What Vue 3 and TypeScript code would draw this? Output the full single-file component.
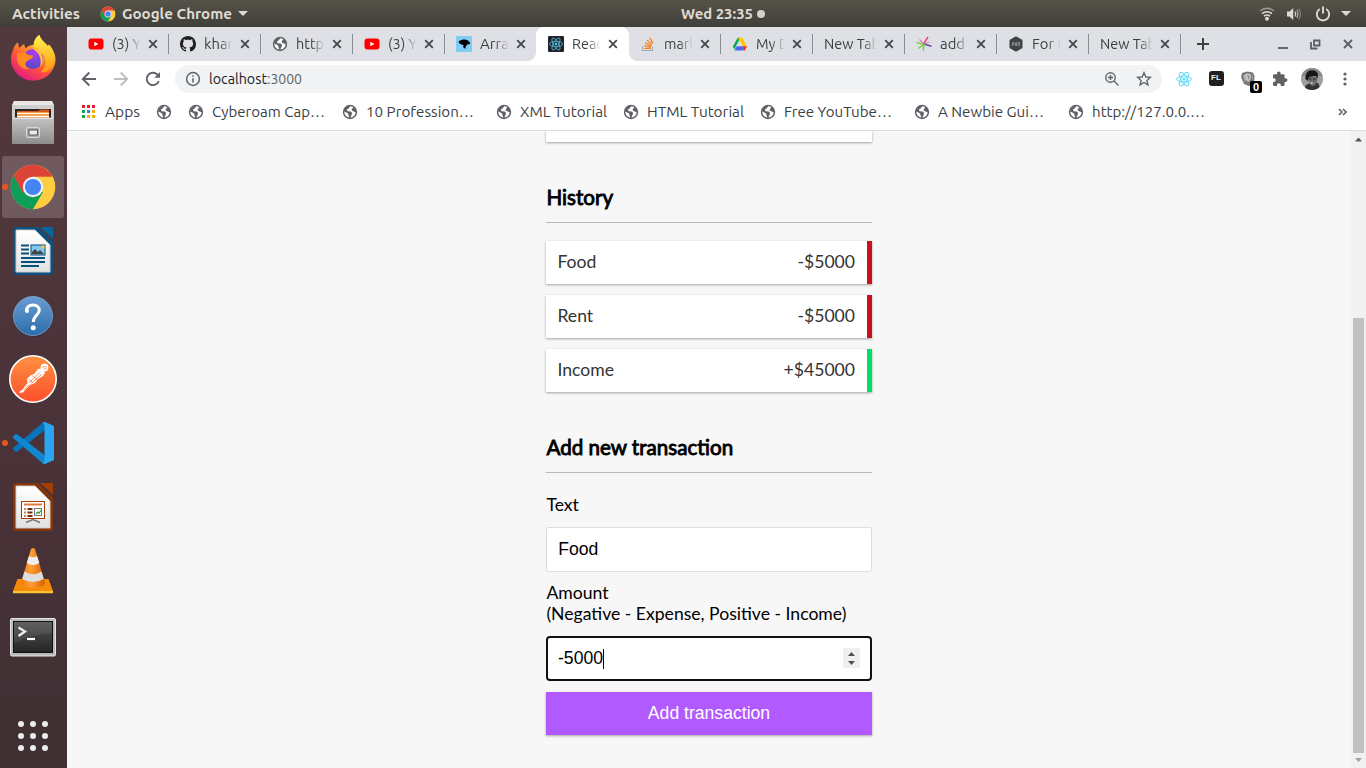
<script setup lang="ts">
import { h } from 'vue'

interface Tab {
  title: string
  width: number
  icon?: string
  active?: boolean
}
interface Bookmark {
  label: string
  slot: number
  width: number
  icon: string
}
interface Transaction {
  text: string
  amount: number
}

// One line of interface text, set to a fixed advance width.
const Fit = (p: { t: string; w: number }) =>
  h('svg', { class: 'fit', width: p.w, height: 20 }, [
    h('text', { x: 0, y: 15, textLength: p.w, lengthAdjust: 'spacingAndGlyphs' }, p.t),
  ])
Fit.props = ['t', 'w']

const tabs: Tab[] = [
  { title: '(3) Y', width: 29, icon: 'youtube' },
  { title: 'khan', width: 32, icon: 'github' },
  { title: 'http', width: 28, icon: 'globe' },
  { title: '(3) Y', width: 29, icon: 'youtube' },
  { title: 'Arra', width: 29, icon: 'array' },
  { title: 'Reac', width: 31, icon: 'reacttab' },
  { title: 'marl', width: 29, icon: 'stack' },
  { title: 'My D', width: 33, icon: 'drive' },
  { title: 'New Tab', width: 56 },
  { title: 'add', width: 25, icon: 'spark' },
  { title: 'For D', width: 36, icon: 'hex' },
  { title: 'New Tab', width: 56 },
]
tabs[5].active = true

const bookmarks: Bookmark[] = [
  { label: 'Apps', slot: 75, width: 35, icon: 'apps' },
  { label: '', slot: 32, width: 0, icon: 'globe' },
  { label: 'Cyberoam Cap…', slot: 154, width: 113, icon: 'globe' },
  { label: '10 Profession…', slot: 154, width: 108, icon: 'globe' },
  { label: 'XML Tutorial', slot: 127, width: 87, icon: 'globe' },
  { label: 'HTML Tutorial', slot: 137, width: 97, icon: 'globe' },
  { label: 'Free YouTube…', slot: 154, width: 108, icon: 'globe' },
  { label: 'A Newbie Gui…', slot: 154, width: 106, icon: 'globe' },
  { label: 'http://127.0.0.…', slot: 154, width: 113, icon: 'globe' },
]

const launchers = ['firefox', 'files', 'chrome', 'writer', 'help', 'postman', 'vscode', 'impress', 'vlc', 'terminal']
const running = ['chrome', 'vscode']

const history: Transaction[] = [
  { text: 'Food', amount: -5000 },
  { text: 'Rent', amount: -5000 },
  { text: 'Income', amount: 45000 },
]
const money = (n: number) => (n < 0 ? '-' : '+') + '$' + Math.abs(n)
</script>

<template>
  <div class="desktop">
    <svg class="defs" width="0" height="0">
      <defs>
        <linearGradient id="g-fox" x1="0.85" y1="0" x2="0.25" y2="1">
          <stop offset="0" stop-color="#fff44f" /><stop offset="0.3" stop-color="#ffb52e" />
          <stop offset="0.6" stop-color="#ff5a36" /><stop offset="1" stop-color="#e31587" />
        </linearGradient>
        <linearGradient id="g-fox2" x1="0" y1="0" x2="0" y2="1">
          <stop offset="0" stop-color="#fff44f" /><stop offset="1" stop-color="#ff980e" />
        </linearGradient>
        <radialGradient id="g-orb" cx="0.6" cy="0.2" r="0.9">
          <stop offset="0" stop-color="#b13cf5" /><stop offset="1" stop-color="#4a4ac0" />
        </radialGradient>
        <linearGradient id="g-metal" x1="0" y1="0" x2="0" y2="1">
          <stop offset="0" stop-color="#c4c4c4" /><stop offset="1" stop-color="#8d8d8d" />
        </linearGradient>
        <linearGradient id="g-help" x1="0" y1="0" x2="0" y2="1">
          <stop offset="0" stop-color="#6a9dd2" /><stop offset="1" stop-color="#2c6dab" />
        </linearGradient>
        <linearGradient id="g-post" x1="0" y1="0" x2="0" y2="1">
          <stop offset="0" stop-color="#fe9140" /><stop offset="1" stop-color="#fd4f2c" />
        </linearGradient>
        <linearGradient id="g-cone" x1="0" y1="0" x2="1" y2="0">
          <stop offset="0" stop-color="#f07800" /><stop offset="0.4" stop-color="#ffa13a" /><stop offset="1" stop-color="#d85a00" />
        </linearGradient>
        <linearGradient id="g-term" x1="0" y1="0" x2="0" y2="1">
          <stop offset="0" stop-color="#555" /><stop offset="1" stop-color="#242424" />
        </linearGradient>
        <linearGradient id="g-paper" x1="0" y1="0" x2="0" y2="1">
          <stop offset="0" stop-color="#fff" /><stop offset="1" stop-color="#e2e2e2" />
        </linearGradient>
      </defs>

      <symbol id="i-firefox" viewBox="0 0 48 48">
        <path d="M4.500 14C5 11 7 8.500 9 7.500L10 13L15 9L16.500 13.500C20 10 23 10 24.500 10C25 5 27 2 30.500 0C31 5 35 7 38 11L40 9.500C44 14 47 20 46.500 26A22.300 21.500 0 0 1 2 25C1.700 21 3 17 4.500 14Z" fill="url(#g-fox)" />
        <path d="M24.500 12C25 5 27 2 30.500 0C32 6 38 8 40 13L40.500 10C44 15 46 20 44 29C41 37 36 38 32 37C38 31 38 24 34 18C31 14 28 13 24.500 12Z" fill="url(#g-fox2)" />
        <circle cx="24" cy="24" r="10" fill="url(#g-orb)" />
        <path d="M8 18C13 17 17 17 19 20L24 20.500C24 24 20 24.500 18 26C16 28 15 32 21 34C14 35 9 31 8 25Z" fill="#ff8b20" />
        <path d="M24 14C31 13 36 17 37 21C35 20 34 19 32 19C35 24 34 29 31 32C33 25 31 18 24 14Z" fill="#ffc43a" />
      </symbol>

      <symbol id="i-files" viewBox="0 0 48 48">
        <path d="M5 2H43L45 6V20H3V6Z" fill="#cfcfcf" />
        <path d="M5 2H43L44.500 6H3.500Z" fill="#e8e8e8" />
        <rect x="6" y="10" width="36" height="12" fill="#2d2420" />
        <path d="M8 12H29L31 10.500H40V20H8Z" fill="#d5571b" />
        <rect x="8" y="13" width="32" height="7" fill="#f4a14e" /><rect x="8" y="14" width="32" height="1" fill="#fff4e2" /><rect x="8" y="17" width="32" height="1" fill="#fff" />
        <path d="M3 20L5 18.500H43L45 20V45H3Z" fill="url(#g-metal)" /><path d="M4 19.500H44" stroke="#e2e2e2" />
        <rect x="17.500" y="28.500" width="13" height="10" rx="1.500" fill="#aaa" stroke="#d8d8d8" />
        <rect x="20" y="31" width="8.500" height="5" fill="#ececec" stroke="#555" />
      </symbol>

      <symbol id="i-chrome" viewBox="0 0 48 48">
        <circle cx="24" cy="24" r="22.300" fill="#ffcd40" />
        <path d="M24 24L4.700 12.850A22.300 22.300 0 0 0 24 46.300L34 29Z" fill="#0f9d58" />
        <path d="M24 24L14 30L4.700 12.850A22.300 22.300 0 0 1 43.800 13.800H24Z" fill="#db4437" />
        <circle cx="24" cy="24" r="10.200" fill="#f1f1f1" /><circle cx="24" cy="24" r="8.100" fill="#4285f4" />
      </symbol>

      <symbol id="i-writer" viewBox="0 0 48 48">
        <path d="M6 0H29L44 15V46Q44 48 42 48H6Q4 48 4 46V2Q4 0 6 0Z" fill="#0d4f7d" /><path d="M31 0H44V12Z" fill="#07659b" />
        <path d="M7 3H26L41 18V45H7Z" fill="url(#g-paper)" stroke="#c7cdd2" />
        <path d="M12 18.500H20M12 22.500H20M12 26.500H20M12 31H36M12 35H36M12 39H30" stroke="#06527f" stroke-width="2" />
        <rect x="22" y="18" width="14" height="10" fill="#83c6ef" stroke="#0b4b78" /><path d="M23 27V25L26 22L29 25L31 23L35 27Z" fill="#444" /><circle cx="34" cy="20" r="1.700" fill="#f8c83a" />
      </symbol>

      <symbol id="i-help" viewBox="0 0 48 48">
        <circle cx="24" cy="25.800" r="20" fill="#2a2027" opacity="0.5" />
        <circle cx="24" cy="25" r="19.500" fill="url(#g-help)" stroke="#7eabd8" stroke-width="0.800" />
        <path d="M17.500 20C17.500 15.500 20.500 14 24.200 14C28 14 30.300 16.300 30.300 19.300C30.300 24 24.300 24.200 24.300 31" fill="none" stroke="#fff" stroke-width="3" /><circle cx="18" cy="20" r="2" fill="#fff" /><circle cx="24.200" cy="36.800" r="2.500" fill="#fff" />
      </symbol>

      <symbol id="i-postman" viewBox="0 0 48 48">
        <circle cx="24" cy="24" r="23.200" fill="url(#g-post)" stroke="#fff" stroke-width="1.600" />
        <circle cx="35.500" cy="12.500" r="3.900" fill="#fff" /><path d="M33 12L37.500 11.500M34.500 14.500L38 13" stroke="#fd7a38" stroke-width="0.700" />
        <path d="M29 14L32 13.500L36 17.500L34 21L29 24L26 28L21 30L14 37.500L10.500 38L10.500 36.500L13.500 34.500L18.500 28L18 24L22 20L25 19Z" fill="#fff" />
        <path d="M20 27.500L31.500 17M22 28.500L33 19M15 35.500L20 29.500M23 20.500L28 25M20 24L24 28" stroke="#fd7637" stroke-width="0.800" fill="none" />
      </symbol>

      <symbol id="i-vscode" viewBox="0 0 48 48">
        <path d="M3.500 29.500L6 32.500Q7 33.500 8.500 32.500L36 11V3L34 3.500Z" fill="#0873b8" />
        <path d="M3.500 18.500L6 15.500Q7 14.500 8.500 15.500L36 36.500V45L34 44.500Z" fill="#1088cf" />
        <path d="M34 3.200L36 3L44 6.500Q45 7 45 8V40Q45 41 44 41.500L36 45L33 44Q35.500 44 35.500 41V7Q35.500 4 33 4Z" fill="#2ca5f0" />
      </symbol>

      <symbol id="i-impress" viewBox="0 0 48 48">
        <path d="M6 0H29L44 15V46Q44 48 42 48H6Q4 48 4 46V2Q4 0 6 0Z" fill="#84350c" /><path d="M31 0H44V12Z" fill="#a33e03" />
        <path d="M7 3H26L41 18V45H7Z" fill="url(#g-paper)" stroke="#d2cac6" />
        <path d="M17 39.500L24 36.500L31 39.500" fill="none" stroke="#777" stroke-width="1.500" />
        <rect x="12.500" y="18.500" width="23" height="17" fill="#fff" stroke="#a43e08" />
        <path d="M15 21.500H33" stroke="#e0783c" stroke-width="2" /><path d="M15 26H17M15 29.500H17M15 33H17" stroke="#d77b47" stroke-width="2" /><path d="M18.500 26H23.500M18.500 29.500H23.500M18.500 33H23.500" stroke="#772a05" stroke-width="2" />
        <rect x="25.500" y="25.500" width="7" height="7" fill="#fff" stroke="#777" /><path d="M27 31L29 29L30 30L32 27.500" fill="none" stroke="#219e3a" stroke-width="1.200" />
      </symbol>

      <symbol id="i-vlc" viewBox="0 0 48 48">
        <path d="M8.500 32H39.500L44 44V46H4V44Z" fill="#f68b09" /><path d="M4 44H44V46.300H4Z" fill="#ffc338" />
        <path d="M22 2Q24 0 26 2L36 36Q35 40.500 24 40.500Q13 40.500 12 36Z" fill="url(#g-cone)" />
        <path d="M20 9Q24 11.500 28 9L30.400 16Q24 20 17.700 16Z" fill="#eee" /><path d="M15.500 24.500Q24 30 32.500 24.500L34.800 32Q24 38 13.200 32Z" fill="#dedede" />
      </symbol>

      <symbol id="i-terminal" viewBox="0 0 48 48">
        <rect x="1.500" y="7.500" width="45" height="37.500" rx="1.500" fill="#b9b9b9" stroke="#e5e5e5" />
        <rect x="4.500" y="10.500" width="39" height="31" fill="url(#g-term)" stroke="#111" />
        <path d="M5 11H43V22Q24 23 5 32Z" fill="#fff" opacity="0.070" />
        <path d="M9.500 16.500L16 20.500L9.500 25" fill="none" stroke="#eee" stroke-width="2.300" /><path d="M18 28H26" stroke="#fff" stroke-width="2.200" />
      </symbol>

      <symbol id="i-globe" viewBox="0 0 16 16">
        <circle cx="8" cy="8" r="7.200" fill="#5f6368" />
        <path d="M8.200 2.300L6.600 4.600L4.900 5.600L5.600 7.300L8.600 7.400L10.200 9L9.400 11.200L8.400 13.500C11.500 13.200 13.600 10.900 13.600 8.200L11.800 7.600L9.600 6.400L10 4.700L11.400 3.500C10.500 2.700 9.300 2.300 8.200 2.300ZM2.400 7.600L4.800 8.700L6.200 9.800L6.600 11.400L7.300 13.500C4.300 13.200 2.200 10.800 2.400 7.600Z" fill="#fff" />
      </symbol>
      <symbol id="i-youtube" viewBox="0 0 16 16"><rect x="0.500" y="2.500" width="15" height="11" rx="3" fill="#f00" /><path d="M6.300 5.700V10.300L10.400 8Z" fill="#fff" /></symbol>
      <symbol id="i-github" viewBox="0 0 16 16">
        <path fill="#202124" d="M8 0C3.580 0 0 3.580 0 8c0 3.540 2.290 6.530 5.470 7.590.4.070.55-.17.55-.38 0-.19-.01-.82-.01-1.490-2.010.37-2.530-.49-2.690-.94-.09-.23-.48-.94-.82-1.130-.28-.15-.68-.52-.01-.53.63-.01 1.080.58 1.230.82.72 1.210 1.870.87 2.330.66.07-.52.28-.87.51-1.070-1.780-.2-3.640-.89-3.640-3.950 0-.87.31-1.590.82-2.150-.08-.2-.36-1.020.08-2.120 0 0 .67-.21 2.200.82.64-.18 1.320-.27 2-.27s1.360.09 2 .27c1.530-1.040 2.200-.82 2.200-.82.44 1.100.16 1.920.08 2.120.51.56.82 1.270.82 2.150 0 3.070-1.870 3.750-3.650 3.950.29.25.54.73.54 1.480 0 1.070-.01 1.930-.01 2.200 0 .21.15.46.55.38A8.010 8.010 0 0 0 16 8c0-4.420-3.580-8-8-8z" />
      </symbol>
      <symbol id="i-array" viewBox="0 0 16 16"><rect width="16" height="16" fill="#7fcdf5" /><path d="M2.500 5.800C3.500 4 6 4.200 7 3.600C10 2.800 13 4.500 14.300 7.200C13.500 8.500 12 8.200 11 8.500L9.800 10.500L9.300 13L7 11L7.700 9C6 9.300 5.500 8 4.500 8C3.500 8 3 7 2.500 5.800Z" fill="#000" /></symbol>
      <symbol id="i-atom" viewBox="0 0 16 16">
        <g fill="none" stroke="currentColor" stroke-width="1"><ellipse cx="8" cy="8" rx="7.500" ry="2.900" /><ellipse cx="8" cy="8" rx="7.500" ry="2.900" transform="rotate(60 8 8)" /><ellipse cx="8" cy="8" rx="7.500" ry="2.900" transform="rotate(120 8 8)" /></g><circle cx="8" cy="8" r="1.500" fill="currentColor" />
      </symbol>
      <symbol id="i-reacttab" viewBox="0 0 16 16">
        <rect width="16" height="16" rx="1" fill="#20232a" /><g fill="none" stroke="#51bfd9" stroke-width="0.800"><ellipse cx="8" cy="8" rx="6.700" ry="2.600" /><ellipse cx="8" cy="8" rx="6.700" ry="2.600" transform="rotate(60 8 8)" /><ellipse cx="8" cy="8" rx="6.700" ry="2.600" transform="rotate(120 8 8)" /></g><circle cx="8" cy="8" r="1.200" fill="#61dafb" />
      </symbol>
      <symbol id="i-stack" viewBox="0 0 16 16"><path d="M2.500 10.500V14.500H12.500V10.500" fill="none" stroke="#a5a9ad" stroke-width="1.200" /><path d="M4.300 12.300H11M4.400 9.700L11 11M5.200 6.900L11.400 9.700M7 4.200L12 8.300M9.700 1.800L13 7.200" stroke="#f48024" stroke-width="1.300" /></symbol>
      <symbol id="i-drive" viewBox="0 0 16 16"><path d="M5.700 1.800H8.500L3.800 10.500L2.400 13.500L0.800 10.500Z" fill="#0da851" /><path d="M5.700 1.800H10.300L15 10.500H10.800L8 5Z" fill="#ffc800" /><path d="M2.500 14.500L4.700 10.300H11V14.500Z" fill="#4a69f5" /><path d="M10.500 10.300H15L13 14.500H11.500Z" fill="#f33327" /></symbol>
      <symbol id="i-spark" viewBox="0 0 16 16"><g fill="none" stroke-width="1.500"><path d="M7.500 8L0.500 6.500" stroke="#76d84c" /><path d="M7 7.500L3.500 3.500" stroke="#e25ab4" stroke-width="1.100" /><path d="M7.500 8L12 1" stroke="#ef4b65" /><path d="M8 8L15.500 10.300" stroke="#7547a3" /><path d="M7.500 8L2.500 12.500" stroke="#7ed321" /><path d="M8 8L7.300 14.500" stroke="#50d848" /><path d="M8 8L13.500 6" stroke="#9b6fc2" stroke-width="0.700" /></g></symbol>
      <symbol id="i-hex" viewBox="0 0 16 16"><path d="M8 0.300L14.500 4V12L8 15.700L1.500 12V4Z" fill="#404346" /><path d="M4.500 10V6.500H6V8.500H5M7.500 6.500V10M8.500 6.500V10M10 10V6.500H11.500V10" fill="none" stroke="#a6a9ab" stroke-width="0.700" /></symbol>
      <symbol id="i-apps" viewBox="0 0 16 16"><path d="M1 1h3v3H1zM6 1h3v3H6zM11 1h3v3h-3z" fill="#ea1c2c" /><path d="M1 6h3v3H1zM1 11h3v3H1z" fill="#0fa54a" /><path d="M6 6h3v3H6z" fill="#2f7bf5" /><path d="M11 6h3v3h-3zM6 11h3v3H6zM11 11h3v3h-3z" fill="#f9ab00" /></symbol>
    </svg>

    <header class="topbar">
      <Fit class="activities" t="Activities" :w="68" />
      <svg class="appicon" width="16" height="16"><use href="#i-chrome" /></svg>
      <Fit t="Google Chrome" :w="110" />
      <svg class="tri" width="10" height="5"><path d="M0 0H10L5 5Z" /></svg>
      <Fit class="clock" t="Wed 23:35" :w="72" />
      <i class="dot"></i>
      <div class="status">
        <svg width="16" height="16" viewBox="0 0 16 16" fill="none" stroke="#dfdbd2" stroke-width="1.500"><path d="M1 5Q8 -0.500 15 5" opacity="0.550" /><path d="M3 7.600Q8 3.700 13 7.600" /><path d="M5 10.200Q8 7.900 11 10.200" /><circle cx="8" cy="12.800" r="2" fill="#dfdbd2" stroke="none" /></svg>
        <svg width="16" height="16" viewBox="0 0 16 16" fill="none" stroke="#dfdbd2" stroke-width="1.200"><path d="M1 5.500H3.500L7.200 2V14L3.500 10.500H1Z" fill="#dfdbd2" stroke="none" /><path d="M9 5.500Q10.500 8 9 10.500" /><path d="M10.800 4Q13 8 10.800 12" opacity="0.700" /><path d="M12.800 2.500Q16 8 12.800 13.500" opacity="0.400" /></svg>
        <svg width="16" height="16" viewBox="0 0 16 16" fill="none" stroke="#dfdbd2" stroke-width="1.900"><path d="M4.700 3A6.200 6.200 0 1 0 11.300 3M8 0.500V7.500" /></svg>
        <svg width="10" height="5"><path d="M0 0H10L5 5Z" fill="#dfdbd2" /></svg>
      </div>
    </header>

    <div class="workspace">
      <nav class="dock">
        <div v-for="name in launchers" :key="name" class="launcher" :class="{ current: name === 'chrome' }">
          <i v-if="running.includes(name)" class="pip"></i>
          <svg width="48" height="48"><use :href="'#i-' + name" /></svg>
        </div>
        <div class="launcher all">
          <svg width="32" height="32" fill="#ededeb"><template v-for="r in 3" :key="r"><circle v-for="c in 3" :key="c" :cx="c * 12 - 8" :cy="r * 12 - 8" r="3" /></template></svg>
        </div>
      </nav>

      <section class="browser">
        <div class="tabs">
          <div v-for="(tab, i) in tabs" :key="i" class="tab" :class="{ active: tab.active, before: i === 4 }">
            <svg v-if="tab.icon" class="favicon" width="16" height="16"><use :href="'#i-' + tab.icon" /></svg>
            <div class="title"><Fit :t="tab.title" :w="tab.width" /></div>
            <svg class="close" width="10" height="10"><path d="M1.200 1.200L8.800 8.800M8.800 1.200L1.200 8.800" /></svg>
          </div>
          <svg class="plus" width="12" height="12"><path d="M6 0V12M0 6H12" /></svg>
          <div class="winbtns">
            <svg width="10" height="10"><path d="M0 9H10" /></svg>
            <svg width="11" height="11"><path d="M4 1.500H9.500V6.500H4ZM1 3V9.500H7.500" /></svg>
            <svg width="10" height="10"><path d="M1 1L9 9M9 1L1 9" /></svg>
          </div>
        </div>

        <div class="toolbar">
          <div class="cell"><svg width="16" height="16" class="line"><path d="M15 8H2M8.300 1.500L1.800 8L8.300 14.500" /></svg></div>
          <div class="cell dim"><svg width="16" height="16" class="line"><path d="M1 8H14M7.700 1.500L14.200 8L7.700 14.500" /></svg></div>
          <div class="cell"><svg width="16" height="16" class="line"><path d="M13.800 10A6.200 6.200 0 1 1 12.400 3.600L14 5.200" /><path d="M15 1V6.700H9.300Z" fill="currentColor" stroke="none" /></svg></div>
          <div class="omnibox">
            <svg width="16" height="16" fill="none" stroke="#5f6368" stroke-width="1.500"><circle cx="8" cy="8" r="6.400" /><path d="M8 7.200V11.500M8 4.300V5.800" /></svg>
            <Fit class="host" t="localhost" :w="58" /><Fit class="port" t=":3000" :w="35" />
            <svg class="mag" width="16" height="16" fill="none" stroke="#5f6368" stroke-width="1.400"><circle cx="6.500" cy="6.500" r="4.700" /><path d="M10 10L14.500 14.500M4 6.500H9M6.500 4V9" /></svg>
            <svg class="star" width="16" height="16" fill="none" stroke="#5f6368" stroke-width="1.400"><path d="M8 1.800L9.800 6L14.300 6.400L10.900 9.400L11.900 13.800L8 11.500L4.100 13.800L5.100 9.400L1.700 6.400L6.200 6Z" /></svg>
          </div>
          <div class="cell atom"><svg width="16" height="16"><use href="#i-atom" /></svg></div>
          <div class="cell"><span class="fl">FL</span></div>
          <div class="cell shield">
            <svg width="16" height="16"><path d="M2 2L7 0.500L13 1.500L14.500 5L14 12L9 15L4 13L1 6Z" fill="#777" /><path d="M3 4H5L6 9L5 12ZM12 4L13 6L12 10Z" fill="#aaa" /><path d="M5 3Q8 2 11 3.500V7Q10 10 8 11Q5.500 9 5 6Z" fill="#c4c4c4" /><path d="M7 5H9V7L8 8" stroke="#777" fill="none" /></svg>
            <span class="badge">0</span>
          </div>
          <div class="cell"><svg width="16" height="16"><path d="M13.700 7.300H12.600V4.600Q12.600 3.200 11.200 3.200H8.600V2.400A1.800 1.800 0 0 0 5 2.400V3.200H2.400Q1 3.200 1 4.600V7.200H1.800A1.900 1.900 0 0 1 1.800 11H1V13.700Q1 15 2.400 15H5V14.100A1.900 1.900 0 0 1 8.800 14.100V15H11.300Q12.600 15 12.600 13.700V10.900H13.700A1.800 1.800 0 0 0 13.700 7.300Z" fill="#5f6368" /></svg></div>
          <div class="cell">
            <svg width="22" height="22"><clipPath id="av"><circle cx="11" cy="11" r="11" /></clipPath><g clip-path="url(#av)"><rect width="22" height="22" fill="#a0a0a0" /><path d="M0 0H22V8H0Z" fill="#8a8a8a" /><path d="M3 22L5 17L10 15L17 15L20 22Z" fill="#333" /><path d="M7 9H16V14Q14 19 11 18Q7 16 7 9Z" fill="#6a6a6a" /><path d="M4.500 11Q4 4 9 2.500Q15 1 17 6L16.500 11L15 8L8 9L6.500 13Z" fill="#171717" /><path d="M8 11H10M12 11H14.500" stroke="#222" /><path d="M9 14L13 15L10 16Z" fill="#ddd" /></g></svg>
          </div>
          <div class="cell dots"><svg width="4" height="16" fill="#5f6368"><circle cx="2" cy="3" r="1.600" /><circle cx="2" cy="8" r="1.600" /><circle cx="2" cy="13" r="1.600" /></svg></div>
        </div>

        <div class="bookmarks">
          <div v-for="(b, i) in bookmarks" :key="i" class="bookmark" :style="{ width: b.slot + 'px' }">
            <svg width="16" height="16"><use :href="'#i-' + b.icon" /></svg>
            <Fit v-if="b.label" :t="b.label" :w="b.width" />
          </div>
          <svg class="more" width="9" height="8"><path d="M1 1L4 4L1 7M5 1L8 4L5 7" /></svg>
        </div>

        <div class="viewport">
          <main class="page">
            <div class="summary"></div>
            <h3>History</h3>
            <ul>
              <li v-for="(t, i) in history" :key="i" :class="t.amount < 0 ? 'minus' : 'plus-amount'">
                <span>{{ t.text }}</span><span>{{ money(t.amount) }}</span>
              </li>
            </ul>
            <h3>Add new transaction</h3>
            <label class="first">Text</label>
            <div class="field">Food</div>
            <label class="second">Amount<br />(Negative - Expense, Positive - Income)</label>
            <div class="field focused">
              -5000<i class="caret"></i>
              <span class="spinner"><svg width="17" height="20" fill="#505050"><path d="M5 8L8.500 4L12 8ZM5 13H12L8.500 17Z" /></svg></span>
            </div>
            <button type="button">Add transaction</button>
          </main>
          <div class="scrollbar">
            <svg width="15" height="17"><path d="M4 10.500H11L7.500 6.500Z" fill="#505050" /></svg>
            <div class="track"><div class="thumb"></div></div>
            <svg width="15" height="15"><path d="M4 5H11L7.500 9Z" fill="#a3a3a3" /></svg>
          </div>
        </div>
      </section>
    </div>
  </div>
</template>

<style>
body { margin: 0; overflow: hidden; }
</style>

<style scoped>
* { box-sizing: border-box; }
svg { display: block; flex: none; }
.defs { position: absolute; }
.desktop { width: 1366px; height: 768px; display: flex; flex-direction: column; overflow: hidden; font-family: Ubuntu, "Noto Sans", sans-serif; font-size: 14.3px; color: #3c4043; }
.fit { fill: currentColor; overflow: visible; }

.topbar { height: 27px; flex: none; display: flex; align-items: center; padding-left: 12px; background: linear-gradient(#57534a, #3f3e39); color: #dfdbd2; font-weight: 700; font-size: 14px; }
.appicon { margin: 0 6px 0 20px; }
.tri { fill: #dfdbd2; margin-left: 6px; }
.clock { margin-left: 433px; }
.dot { width: 8px; height: 8px; border-radius: 50%; background: #d5d1c9; margin-left: 4px; }
.status { display: flex; align-items: center; margin-left: auto; padding-right: 15px; gap: 12px; }
.status svg:nth-child(1) { margin-right: -1px; }
.status svg:nth-child(3) { margin-left: 1px; }
.status svg:nth-child(4) { margin-left: -2px; }

.workspace { flex: 1; display: flex; min-height: 0; }
.dock { width: 67px; flex: none; display: flex; flex-direction: column; background: linear-gradient(#52393d, #473137 70%, #3e3033); }
.launcher { height: 64px; width: 66px; display: flex; align-items: center; justify-content: center; position: relative; flex: none; }
.launcher.current::before { content: ""; position: absolute; left: 2px; top: 1px; width: 62px; height: 62px; border-radius: 3px; background: #705a60; }
.launcher svg { position: relative; }
.pip { position: absolute; left: 2px; top: 29px; width: 6px; height: 6px; border-radius: 50%; background: #e95420; z-index: 1; }
.all { margin-top: auto; }

.browser { flex: 1; min-width: 0; display: flex; flex-direction: column; background: #fff; }
.tabs { height: 34px; flex: none; display: flex; align-items: center; padding-left: 10px; background: #dfe0e6; }
.tab { width: 92px; height: 34px; display: flex; align-items: center; padding-left: 11px; position: relative; }
.tab::after { content: ""; position: absolute; right: 0; top: 7px; width: 1px; height: 20px; background: #8b8d92; }
.tab.before::after { display: none; }
.favicon { margin-right: 8px; }
.title { width: 29px; overflow: hidden; -webkit-mask-image: linear-gradient(90deg, #000 calc(100% - 14px), transparent); mask-image: linear-gradient(90deg, #000 calc(100% - 14px), transparent); }
.title:first-child { width: 53px; }
.close { margin-left: 7px; stroke: #44474b; stroke-width: 1.8; }
.tab.active { width: 93px; margin-left: -1px; padding-left: 12px; background: #fff; border-radius: 8px 8px 0 0; }
.tab.active::before, .tab.active::after { content: ""; position: absolute; top: auto; bottom: 0; width: 8px; height: 8px; }
.tab.active::before { left: -8px; background: radial-gradient(circle at 0 0, transparent 7.5px, #fff 8px); }
.tab.active::after { right: -8px; background: radial-gradient(circle at 100% 0, transparent 7.5px, #fff 8px); }
.plus { margin-left: 16px; stroke: #3c4043; stroke-width: 2; }
.winbtns { margin-left: auto; display: flex; gap: 22px; padding-right: 13px; fill: none; stroke: #5b5e63; stroke-width: 1.8; }

.toolbar { height: 36px; flex: none; display: flex; align-items: center; padding: 0 6px; }
.cell { width: 32px; height: 28px; display: flex; align-items: center; justify-content: center; position: relative; color: #5f6368; }
.dim { color: #bcbec1; }
.line { fill: none; stroke: currentColor; stroke-width: 1.9; }
.omnibox { flex: 1; height: 28px; margin: 0 6px; border-radius: 14px; background: #f1f3f4; display: flex; align-items: center; padding: 0 10px; }
.host { margin-left: 8px; color: #202124; }
.port { color: #5f6368; }
.mag { margin-left: auto; }
.star { margin-left: 16px; }
.atom { color: #61dafb; }
.fl { width: 15px; height: 15px; margin-top: -1px; border-radius: 3px; background: #202020; color: #eee; font: 700 8px/14px "Liberation Sans", Arial, sans-serif; text-align: center; }
.badge { position: absolute; left: 18px; top: 16px; width: 12px; height: 12px; border-radius: 2px; background: #000; color: #fff; font: 700 11px/12px "Liberation Sans", Arial, sans-serif; text-align: center; }
.dots { padding-left: 1px; }

.bookmarks { height: 34px; flex: none; display: flex; align-items: center; padding: 0 19px 3px 14px; border-bottom: 1px solid #dadce0; }
.bookmark { display: flex; align-items: center; gap: 8px; flex: none; }
.more { margin-left: auto; fill: none; stroke: #5f6368; stroke-width: 1.6; }

.viewport { flex: 1; min-height: 0; display: flex; background: #f7f7f7; }
.page { width: 326px; margin: 0 auto; font-family: Lato, sans-serif; font-size: 17.6px; line-height: 21px; color: #000; }
.summary { height: 11px; background: #fff; box-shadow: 0 1px 3px rgba(0, 0, 0, .12), 0 1px 2px rgba(0, 0, 0, .24); clip-path: inset(0 -5px -5px -5px); }
h3 { margin: 43px 0 18px; padding: 0 0 12px 0.5px; border-bottom: 1px solid #bbb; font-size: 20.6px; line-height: 25px; font-weight: 400; -webkit-text-stroke: 0.9px #000; }
ul { list-style: none; margin: 0; padding: 0; display: flex; flex-direction: column; gap: 11px; }
li { height: 43px; display: flex; align-items: center; justify-content: space-between; padding: 0 12px 2px 11.4px; background: #fff; color: #333; border-right: 5px solid #c9121f; box-shadow: 0 1px 3px rgba(0, 0, 0, .12), 0 1px 2px rgba(0, 0, 0, .24); }
.plus-amount { border-right-color: #00df6c; }
label { display: block; margin-bottom: 12px; padding-left: 0.4px; white-space: nowrap; }
.first { margin-top: 21px; }
.second { margin-top: 10px; }
.field { height: 45px; display: flex; align-items: center; padding: 0 11.3px; border: 1px solid #dedede; border-radius: 2px; background: #fff; font-family: "Liberation Sans", Arial, sans-serif; }
.focused { border: 2px solid #101010; border-radius: 4px; padding: 0 10px; }
.caret { width: 1px; height: 20px; background: #000; }
.spinner { margin: 0 0 1px auto; background: #efefef; }
button { display: block; width: 100%; height: 43px; margin-top: 11px; padding: 0; border: 0; background: #b05aff; color: #fff; font: 17.6px "Liberation Sans", Arial, sans-serif; box-shadow: 0 1px 3px rgba(0, 0, 0, .12), 0 1px 2px rgba(0, 0, 0, .24); }

.scrollbar { width: 15px; flex: none; display: flex; flex-direction: column; background: #f1f1f1; }
.track { flex: 1; padding: 170px 2px 0; }
.thumb { height: 435px; background: #c1c1c1; }
</style>
